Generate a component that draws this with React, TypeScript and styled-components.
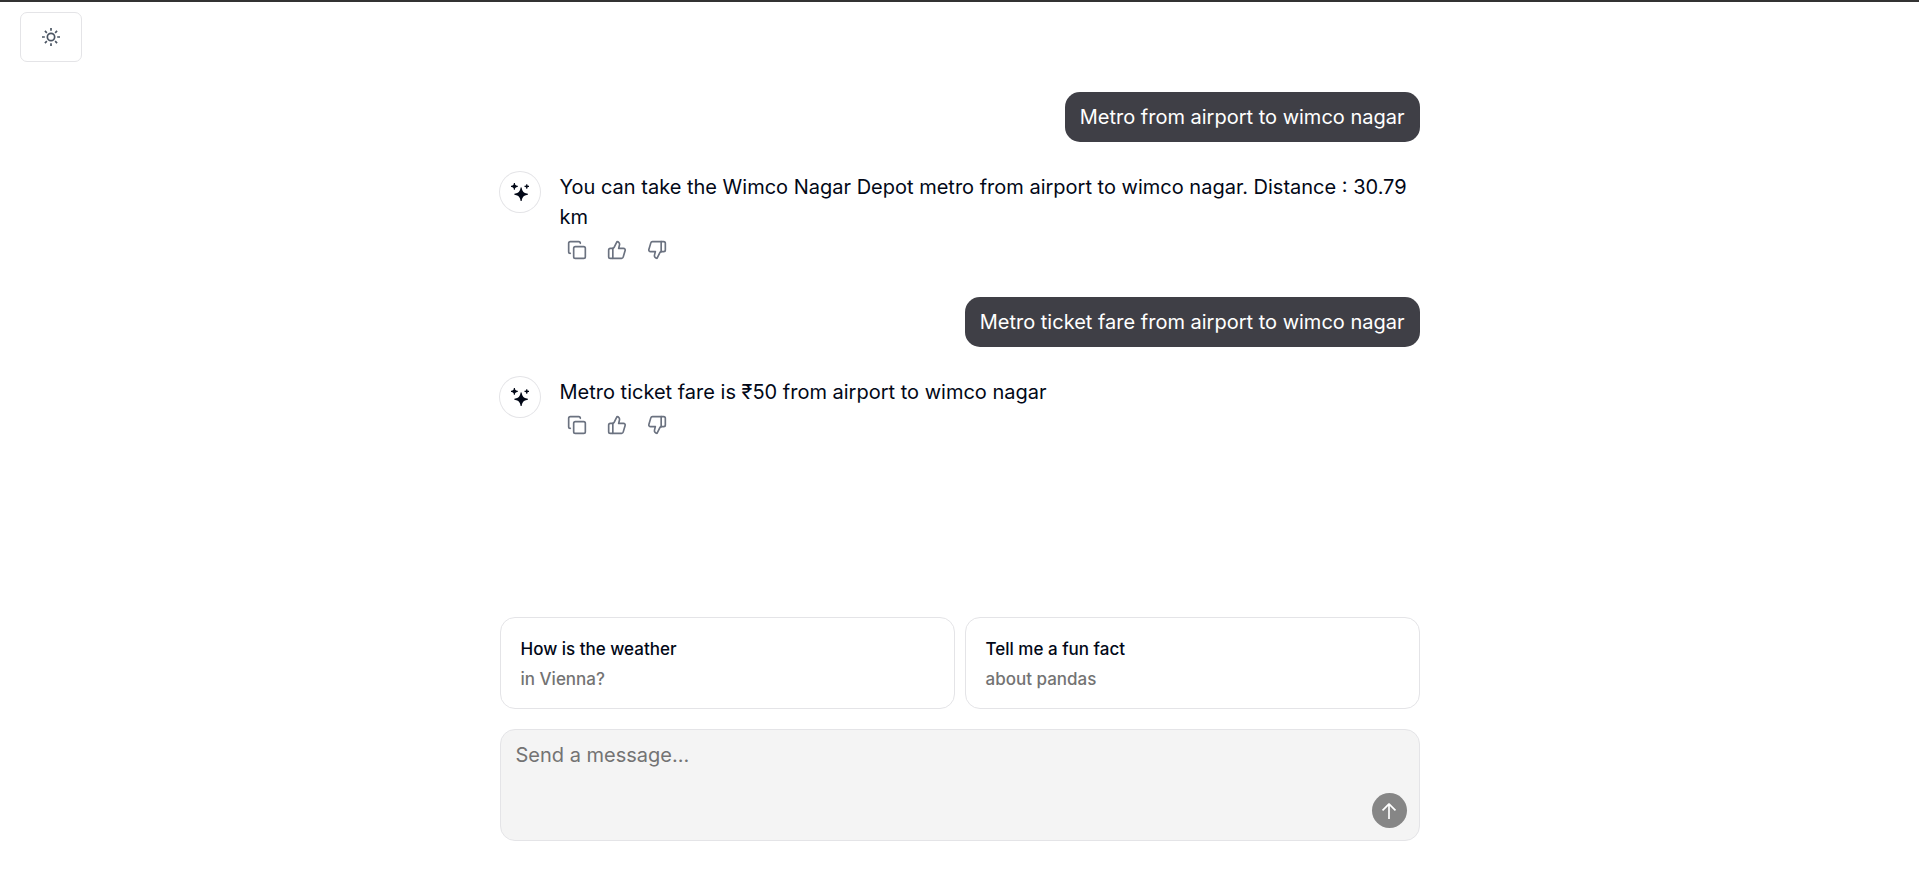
import React from "react";
import styled, { createGlobalStyle } from "styled-components";
import { Copy, ThumbsDown, ThumbsUp } from "lucide-react";

const GlobalStyle = createGlobalStyle`
  *, *::before, *::after { box-sizing: border-box; }
  body {
    margin: 0;
    background: #ffffff;
    color: #020817;
    font-family: Inter, "Liberation Sans", sans-serif;
    font-size: 20px;
    line-height: 30px;
  }
  button, textarea { font: inherit; color: inherit; }
  button { cursor: pointer; }
`;

const Page = styled.div`
  display: flex;
  flex-direction: column;
  min-height: 100vh;
  border-top: 2px solid #333333;
`;

const Header = styled.header`
  display: flex;
  padding: 10px 20px;
`;

const ThemeButton = styled.button`
  display: flex;
  align-items: center;
  justify-content: center;
  width: 62px;
  height: 50px;
  padding: 0;
  border: 1px solid #e4e4e7;
  border-radius: 7px;
  background: #ffffff;
  color: #4b5563;
`;

const Column = styled.div`
  width: 100%;
  max-width: 960px;
  margin: 0 auto;
  padding: 0 20px;
`;

const Thread = styled(Column).attrs({ as: "main" })`
  display: flex;
  flex: 1;
  flex-direction: column;
  gap: 30px;
  padding-top: 20px;
`;

const UserMessage = styled.div`
  align-self: flex-end;
  padding: 10px 15px;
  border-radius: 15px;
  background: #3f3f46;
  color: #ffffff;
`;

const BotMessage = styled.article`
  display: flex;
  gap: 20px;
`;

const Avatar = styled.div`
  display: flex;
  flex: none;
  align-items: center;
  justify-content: center;
  width: 40px;
  height: 40px;
  border-radius: 50%;
  box-shadow: 0 0 0 1px #e4e4e7;
`;

const BotText = styled.p`
  margin: 0;
`;

const Actions = styled.div`
  display: flex;
  gap: 5px;
`;

const ActionButton = styled.button`
  display: flex;
  align-items: center;
  justify-content: center;
  width: 35px;
  height: 35px;
  padding: 0;
  border: 0;
  background: none;
  color: #6b7280;
`;

const Footer = styled(Column).attrs({ as: "footer" })`
  display: flex;
  flex-direction: column;
  gap: 20px;
  padding-bottom: 29px;
`;

const Suggestions = styled.div`
  display: grid;
  grid-template-columns: 1fr 1fr;
  gap: 10px;
`;

const Suggestion = styled.button`
  display: flex;
  flex-direction: column;
  gap: 5px;
  padding: 19px 20px 16px;
  border: 1px solid #e4e4e7;
  border-radius: 15px;
  background: #ffffff;
  font-size: 17px;
  font-weight: 500;
  line-height: 25px;
  text-align: left;
`;

const Muted = styled.span`
  color: #737373;
`;

const Composer = styled.form`
  display: flex;
  align-items: flex-end;
  padding: 10px 12px 12px 15px;
  border: 1px solid #e4e4e7;
  border-radius: 15px;
  background: #f4f4f4;
`;

const MessageInput = styled.textarea`
  display: block;
  flex: 1;
  height: 88px;
  padding: 0;
  border: 0;
  outline: 0;
  resize: none;
  background: transparent;
  &::placeholder { color: #737373; opacity: 1; }
`;

const SendButton = styled.button`
  display: flex;
  align-items: center;
  justify-content: center;
  width: 35px;
  height: 35px;
  padding: 0;
  border: 0;
  border-radius: 50%;
  background: #868686;
  color: #ffffff;
`;

const SunIcon = () => (
  <svg width="18" height="18" viewBox="0 0 16 16" fill="none" stroke="currentColor" strokeWidth="1.5" aria-hidden="true">
    <circle cx="8" cy="8" r="3.25" />
    <path d="M8 0V2.5M8 13.5V16M0 8H2.5M13.5 8H16M2.6 2.6L4.3 4.3M11.7 11.7L13.4 13.4M2.6 13.4L4.3 11.7M11.7 4.3L13.4 2.6" />
  </svg>
);

const SparklesIcon = () => (
  <svg width="18" height="18" viewBox="0 0 16 16" fill="currentColor" aria-hidden="true">
    <path d="M2.5 0.5V0H3.5V0.5C3.5 1.60457 4.39543 2.5 5.5 2.5H6V3.5H5.5C4.39543 3.5 3.5 4.39543 3.5 5.5V6H2.5V5.5C2.5 4.39543 1.60457 3.5 0.5 3.5H0V2.5H0.5C1.60457 2.5 2.5 1.60457 2.5 0.5Z" />
    <path d="M14.5 4.5V5H13.5V4.5C13.5 3.94772 13.0523 3.5 12.5 3.5H12V2.5H12.5C13.0523 2.5 13.5 2.05228 13.5 1.5V1H14.5V1.5C14.5 2.05228 14.9477 2.5 15.5 2.5H16V3.5H15.5C14.9477 3.5 14.5 3.94772 14.5 4.5Z" />
    <path d="M8.40706 4.92939L8.5 4H9.5L9.59294 4.92939C9.82973 7.29734 11.7027 9.17027 14.0706 9.40706L15 9.5V10.5L14.0706 10.5929C11.7027 10.8297 9.82973 12.7027 9.59294 15.0706L9.5 16H8.5L8.40706 15.0706C8.17027 12.7027 6.29734 10.8297 3.92939 10.5929L3 10.5V9.5L3.92939 9.40706C6.29734 9.17027 8.17027 7.29734 8.40706 4.92939Z" />
  </svg>
);

const ArrowUpIcon = () => (
  <svg width="18" height="18" viewBox="0 0 16 16" fill="currentColor" aria-hidden="true">
    <path d="M8.70711 1.39644C8.31659 1.00592 7.68342 1.00592 7.2929 1.39644L2.21968 6.46966L1.68935 6.99999L2.75001 8.06065L3.28034 7.53032L7.25001 3.56065V15H8.75001V3.56065L12.7197 7.53032L13.25 8.06065L14.3107 6.99999L13.7803 6.46966L8.70711 1.39644Z" />
  </svg>
);

type Message = { role: "user" | "bot"; text: string };

const messages: Message[] = [
  { role: "user", text: "Metro from airport to wimco nagar" },
  {
    role: "bot",
    text: "You can take the Wimco Nagar Depot metro from airport to wimco nagar. Distance : 30.79 km",
  },
  { role: "user", text: "Metro ticket fare from airport to wimco nagar" },
  { role: "bot", text: "Metro ticket fare is ₹50 from airport to wimco nagar" },
];

const suggestions = [
  { title: "How is the weather", detail: "in Vienna?" },
  { title: "Tell me a fun fact", detail: "about pandas" },
];

const BotReply = ({ text }: { text: string }) => (
  <BotMessage>
    <Avatar>
      <SparklesIcon />
    </Avatar>
    <div>
      <BotText>{text}</BotText>
      <Actions>
        <ActionButton type="button" aria-label="Copy">
          <Copy size={20} />
        </ActionButton>
        <ActionButton type="button" aria-label="Good response">
          <ThumbsUp size={20} />
        </ActionButton>
        <ActionButton type="button" aria-label="Bad response">
          <ThumbsDown size={20} />
        </ActionButton>
      </Actions>
    </div>
  </BotMessage>
);

export default function App() {
  return (
    <>
      <GlobalStyle />
      <Page>
        <Header>
          <ThemeButton type="button" aria-label="Toggle theme">
            <SunIcon />
          </ThemeButton>
        </Header>
        <Thread>
          {messages.map((m) =>
            m.role === "user" ? (
              <UserMessage key={m.text}>{m.text}</UserMessage>
            ) : (
              <BotReply key={m.text} text={m.text} />
            ),
          )}
        </Thread>
        <Footer>
          <Suggestions>
            {suggestions.map((s) => (
              <Suggestion key={s.title} type="button">
                <span>{s.title}</span>
                <Muted>{s.detail}</Muted>
              </Suggestion>
            ))}
          </Suggestions>
          <Composer onSubmit={(e) => e.preventDefault()}>
            <MessageInput aria-label="Message" placeholder="Send a message..." />
            <SendButton type="submit" aria-label="Send message">
              <ArrowUpIcon />
            </SendButton>
          </Composer>
        </Footer>
      </Page>
    </>
  );
}
